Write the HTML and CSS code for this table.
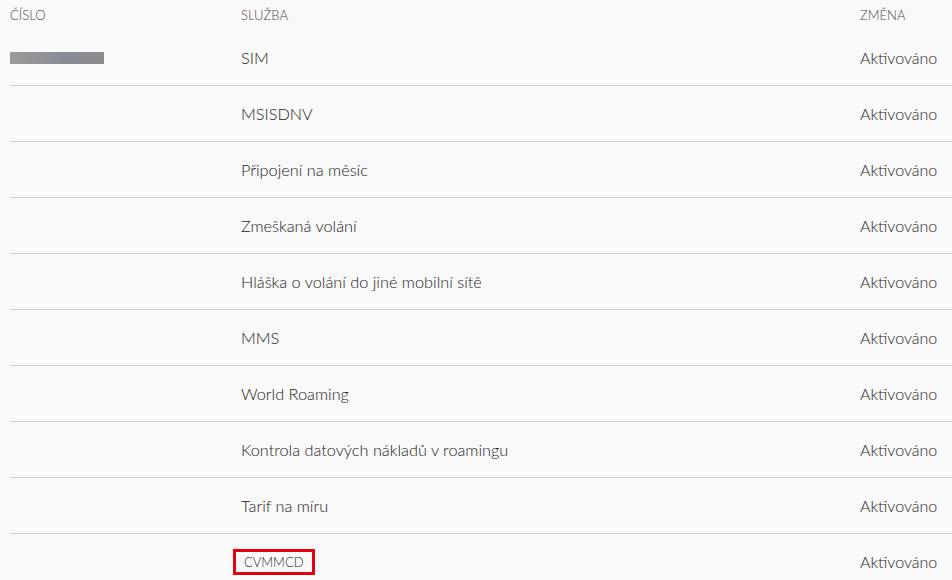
FILE: index.html
```html
<!DOCTYPE html>
<html>
<head>
<meta charset="utf-8">
<link rel="stylesheet" href="styles.css">
</head>
<body>
<div class="table">
  <div class="head">
    <div class="c1">ČÍSLO</div>
    <div class="c2">SLUŽBA</div>
    <div class="c3">ZMĚNA</div>
  </div>
  <div class="row">
    <div class="c1"><span class="redact"></span></div>
    <div class="c2">SIM</div>
    <div class="c3">Aktivováno</div>
  </div>
  <div class="row"><div class="c1"></div><div class="c2">MSISDNV</div><div class="c3">Aktivováno</div></div>
  <div class="row"><div class="c1"></div><div class="c2">Připojení na měsíc</div><div class="c3">Aktivováno</div></div>
  <div class="row"><div class="c1"></div><div class="c2">Zmeškaná volání</div><div class="c3">Aktivováno</div></div>
  <div class="row"><div class="c1"></div><div class="c2">Hláška o volání do jiné mobilní sítě</div><div class="c3">Aktivováno</div></div>
  <div class="row"><div class="c1"></div><div class="c2">MMS</div><div class="c3">Aktivováno</div></div>
  <div class="row"><div class="c1"></div><div class="c2">World Roaming</div><div class="c3">Aktivováno</div></div>
  <div class="row"><div class="c1"></div><div class="c2">Kontrola datových nákladů v roamingu</div><div class="c3">Aktivováno</div></div>
  <div class="row"><div class="c1"></div><div class="c2">Tarif na míru</div><div class="c3">Aktivováno</div></div>
  <div class="row last"><div class="c1"></div><div class="c2"><span class="boxed">CVMMCD</span></div><div class="c3">Aktivováno</div></div>
</div>
</body>
</html>
```
FILE: styles.css
```css
html, body {
  margin: 0;
  padding: 0;
  background: #f9f9f9;
  font-family: Lato, "Open Sans", sans-serif;
  font-weight: 300;
  color: #1c1c1c;
}
.table {
  margin-left: 10px;
}
.head,
.row {
  display: grid;
  grid-template-columns: 231px 1fr 92px;
  align-items: center;
}
.head {
  height: 30px;
  font-size: 13px;
  color: #4a4a4a;
}
.row {
  height: 55px;
  border-bottom: 1px solid #cfcfcf;
  font-size: 16.3px;
}
.row .c3 { font-size: 16px; }
.row.last { border-bottom: none; }
.redact {
  display: block;
  width: 94px;
  height: 12px;
  background: linear-gradient(90deg, #9a9a9a, #8e9196 40%, #878d96 60%, #8c8c8c);
}
.boxed {
  display: inline-block;
  margin-left: -8px;
  border: 3px solid #e3000f;
  padding: 2px 8px 2px 8px;
  font-size: 13px;
  line-height: 16px;
  color: #2a2a2a;
}
```
